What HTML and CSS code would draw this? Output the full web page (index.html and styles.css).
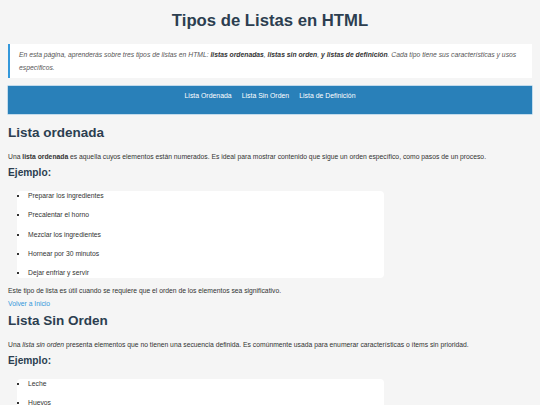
FILE: index.html
```html
<!DOCTYPE html>
<html lang="es">
<head>
<meta charset="utf-8">
<title>Tipos de Listas en HTML</title>
<link rel="stylesheet" href="styles.css">
</head>
<body>
<div class="page">
  <h1 class="title">Tipos de Listas en HTML</h1>
  <div class="intro">En esta página, aprenderás sobre tres tipos de listas en HTML: <strong>listas ordenadas</strong>, <strong>listas sin orden</strong>, <strong>y listas de definición</strong>. Cada tipo tiene sus características y usos específicos.</div>
  <nav class="nav">
    <a href="#ordenada">Lista Ordenada</a>
    <a href="#sinorden">Lista Sin Orden</a>
    <a href="#definicion">Lista de Definición</a>
  </nav>

  <section class="section" id="ordenada">
    <h2 class="sec-title">Lista ordenada</h2>
    <p class="text first">Una <strong>lista ordenada</strong> es aquella cuyos elementos están numerados. Es ideal para mostrar contenido que sigue un orden específico, como pasos de un proceso.</p>
    <h3 class="example">Ejemplo:</h3>
    <ul class="list">
      <li>Preparar los ingredientes</li>
      <li>Precalentar el horno</li>
      <li>Mezclar los ingredientes</li>
      <li>Hornear por 30 minutos</li>
      <li>Dejar enfriar y servir</li>
    </ul>
    <p class="text after">Este tipo de lista es útil cuando se requiere que el orden de los elementos sea significativo.</p>
    <a class="back" href="#">Volver a Inicio</a>
  </section>

  <section class="section" id="sinorden">
    <h2 class="sec-title second">Lista Sin Orden</h2>
    <p class="text first">Una <em>lista sin orden</em> presenta elementos que no tienen una secuencia definida. Es comúnmente usada para enumerar características o ítems sin prioridad.</p>
    <h3 class="example">Ejemplo:</h3>
    <ul class="list">
      <li>Leche</li>
      <li>Huevos</li>
      <li>Pan</li>
      <li>Frutas</li>
    </ul>
  </section>
</div>
</body>
</html>
```

FILE: styles.css
```css
html, body {
  margin: 0;
  padding: 0;
  background: #f5f5f5;
}
body {
  font-family: "Liberation Sans", Arial, sans-serif;
  color: #333333;
}
.page {
  padding: 0 8px;
}
.title {
  margin: 11px 0 13px;
  font-size: 16.7px;
  line-height: 20px;
  font-weight: bold;
  text-align: center;
  color: #2c3e50;
}
.intro {
  background: #ffffff;
  border-left: 2.5px solid #3498db;
  padding: 5px 12px 4px 9px;
  font-size: 6.77px;
  line-height: 12.5px;
  font-style: italic;
  color: #555555;
}
.intro strong {
  color: #333333;
}
.nav {
  margin-top: 8px;
  background: #2980b9;
  padding: 5px 0 13px;
  display: flex;
  justify-content: center;
  gap: 10px;
  font-size: 6.9px;
  line-height: 10px;
  box-shadow: 0 0 0 0.5px #8fc1e3;
}
.nav a {
  color: #ffffff;
  text-decoration: none;
}
.sec-title {
  margin: 11px 0 0;
  font-size: 13.5px;
  line-height: 16px;
  font-weight: bold;
  color: #2c3e50;
}
.sec-title.second {
  margin-top: 3px;
}
.text {
  margin: 0;
  font-size: 6.77px;
  line-height: 12px;
}
.text.first {
  margin-top: 10px;
}
.text.after {
  margin-top: 7px;
}
.example {
  margin: 4px 0 0;
  font-size: 10.2px;
  line-height: 12px;
  font-weight: bold;
  color: #2c3e50;
}
.list {
  box-sizing: border-box;
  margin: 12px 0 0 9px;
  width: 70%;
  padding: 0 0 0 11px;
  background: #ffffff;
  border-radius: 4px;
  font-size: 6.77px;
  line-height: 10px;
  list-style: square;
}
.list li {
  margin-bottom: 9.3px;
}
.list li:last-child {
  margin-bottom: 0;
}
.back {
  display: block;
  margin-top: 1px;
  font-size: 6.77px;
  line-height: 12px;
  color: #3498db;
  text-decoration: none;
}
```
